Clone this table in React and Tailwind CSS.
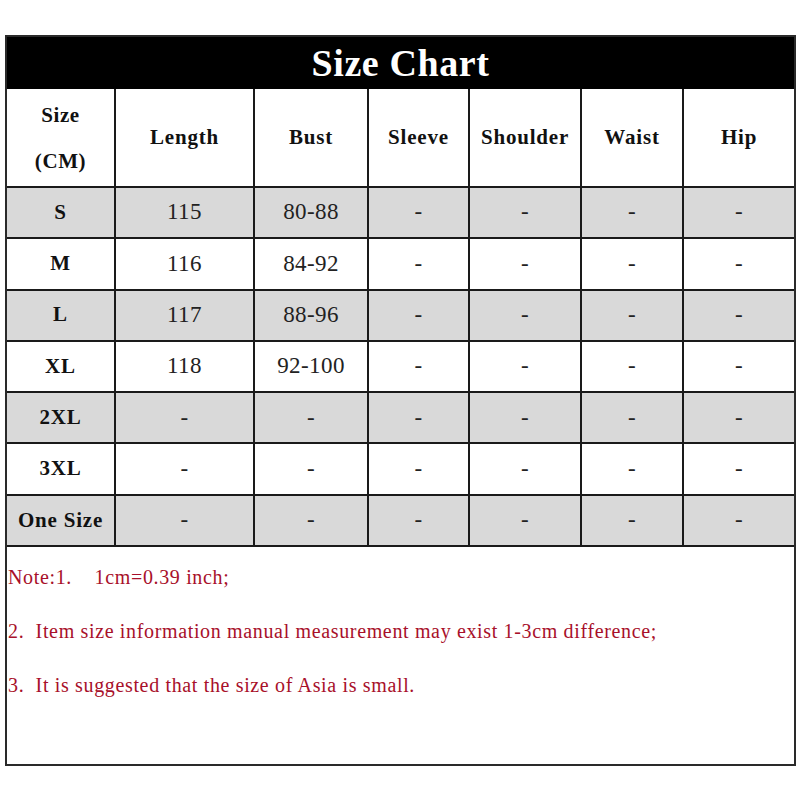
import React from 'react';

const cols = ['Length', 'Bust', 'Sleeve', 'Shoulder', 'Waist', 'Hip'];
const widths = ['w-[108px]', 'w-[139px]', 'w-[114px]', 'w-[101px]', 'w-[112px]', 'w-[102px]', 'w-[111px]'];

const rows = [
    ['S', '115', '80-88', '-', '-', '-', '-'],
    ['M', '116', '84-92', '-', '-', '-', '-'],
    ['L', '117', '88-96', '-', '-', '-', '-'],
    ['XL', '118', '92-100', '-', '-', '-', '-'],
    ['2XL', '-', '-', '-', '-', '-', '-'],
    ['3XL', '-', '-', '-', '-', '-', '-'],
    ['One Size', '-', '-', '-', '-', '-', '-'],
];

export default function App() {
    return (
        <div className="w-[800px] h-[800px] bg-white pt-[35px] pl-[5px]" style={{ fontFamily: '"Liberation Serif", "Times New Roman", serif' }}>
            <div className="w-[791px] h-[731px] border-2 border-[#2a2a2a] flex flex-col">
                <div className="h-[52px] bg-black flex items-center justify-center">
                    <span className="text-white font-bold text-[38px] leading-none tracking-[0.6px]">Size Chart</span>
                </div>
                <table className="table-fixed border-collapse w-[787px]">
                    <colgroup>
                        {widths.map((w, i) => <col key={i} className={w} />)}
                    </colgroup>
                    <thead>
                        <tr className="h-[98px]">
                            <th className="border-2 border-t-0 border-l-0 border-[#1a1a1a] font-bold text-[21px] tracking-[0.6px] leading-[46px] text-[#111] p-0">
                                Size<br />(CM)
                            </th>
                            {cols.map((c, i) => (
                                <th key={c} className={`border-2 border-t-0 border-[#1a1a1a] font-bold text-[21px] tracking-[0.8px] text-[#111] p-0 ${i === cols.length - 1 ? 'border-r-0' : ''}`}>{c}</th>
                            ))}
                        </tr>
                    </thead>
                    <tbody>
                        {rows.map((r, ri) => (
                            <tr key={ri} className={`h-[51.3px] ${ri % 2 === 0 ? 'bg-[#d9d9d9]' : 'bg-white'}`}>
                                {r.map((v, ci) => (
                                    <td
                                        key={ci}
                                        className={`border-2 border-[#1a1a1a] text-center p-0 ${ci === 0 ? 'border-l-0 font-bold text-[#111] text-[21px] tracking-[0.8px]' : 'text-[23px] tracking-[0.4px] text-[#222]'} ${ci === r.length - 1 ? 'border-r-0' : ''}`}
                                    >
                                        {v}
                                    </td>
                                ))}
                            </tr>
                        ))}
                    </tbody>
                </table>
                <div className="flex flex-col text-[20px] tracking-[0.65px] text-[#a8102a] pl-[1px] pt-[17px] gap-[28px] leading-[26px]">
                    <div className="whitespace-pre">Note:1.    1cm=0.39 inch;</div>
                    <div className="whitespace-pre">2.  Item size information manual measurement may exist 1-3cm difference;</div>
                    <div className="whitespace-pre">3.  It is suggested that the size of Asia is small.</div>
                </div>
            </div>
        </div>
    );
}
